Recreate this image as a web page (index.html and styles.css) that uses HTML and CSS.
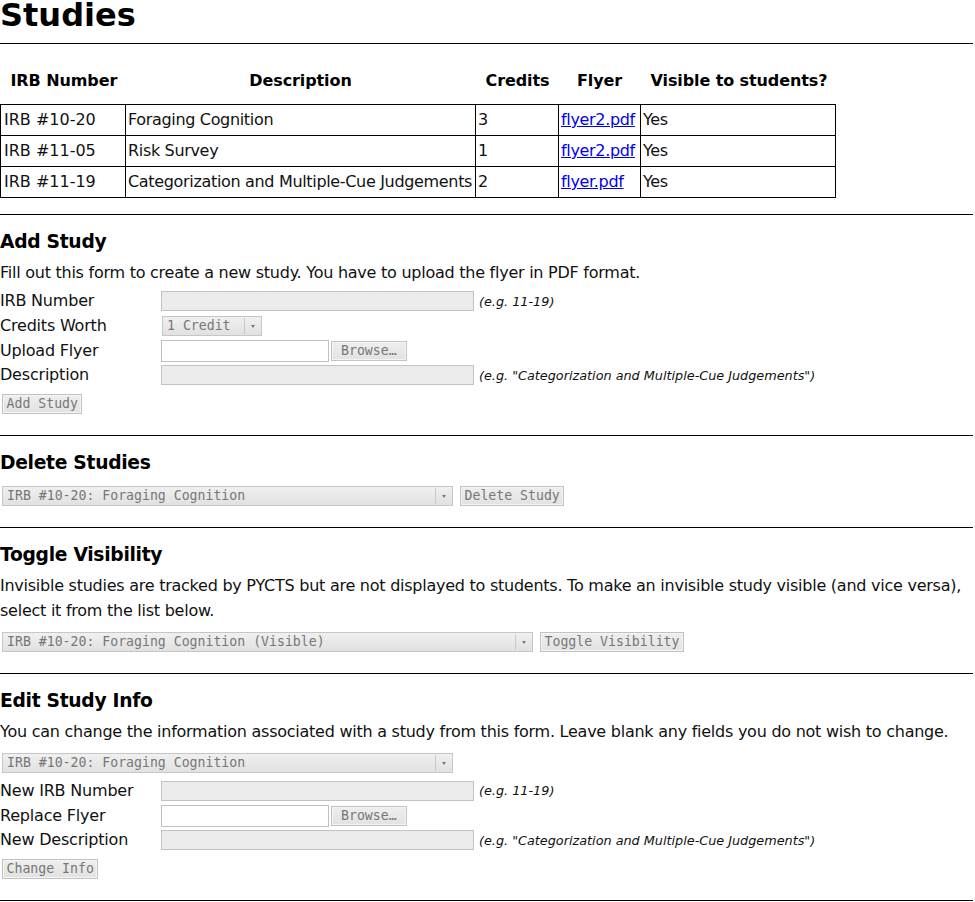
FILE: index.html
```html
<!DOCTYPE html>
<html lang="en">
<head>
<meta charset="utf-8">
<title>Studies</title>
<link rel="stylesheet" href="styles.css">
</head>
<body>
<div class="page">
  <h1 class="title">Studies</h1>
  <hr class="rule rule-top">

  <table class="studies">
    <colgroup>
      <col class="c-irb"><col class="c-desc"><col class="c-cred"><col class="c-flyer"><col class="c-vis">
    </colgroup>
    <thead>
      <tr><th>IRB Number</th><th>Description</th><th>Credits</th><th>Flyer</th><th>Visible to students?</th></tr>
    </thead>
    <tbody>
      <tr><td class="irb">IRB #10-20</td><td>Foraging Cognition</td><td>3</td><td><a href="#">flyer2.pdf</a></td><td>Yes</td></tr>
      <tr><td class="irb">IRB #11-05</td><td>Risk Survey</td><td>1</td><td><a href="#">flyer2.pdf</a></td><td>Yes</td></tr>
      <tr><td class="irb">IRB #11-19</td><td>Categorization and Multiple-Cue Judgements</td><td>2</td><td><a href="#">flyer.pdf</a></td><td>Yes</td></tr>
    </tbody>
  </table>

  <hr class="rule rule-table">

  <section class="sec">
    <h3 class="sec-title">Add Study</h3>
    <p class="sec-text">Fill out this form to create a new study. You have to upload the flyer in PDF format.</p>
    <div class="fields">
      <label class="f-label">IRB Number</label>
      <div class="f-ctl"><input class="text-in" type="text"><span class="hint">(e.g. 11-19)</span></div>
      <label class="f-label">Credits Worth</label>
      <div class="f-ctl">
        <span class="sel sel-credit">
          <select class="sel-box"><option>1 Credit</option><option>2 Credits</option><option>3 Credits</option></select>
          <span class="sel-arrow"></span>
        </span>
      </div>
      <label class="f-label">Upload Flyer</label>
      <div class="f-ctl"><span class="file"><span class="file-box"></span><button class="btn btn-browse" type="button">Browse…</button></span></div>
      <label class="f-label">Description</label>
      <div class="f-ctl"><input class="text-in" type="text"><span class="hint">(e.g. "Categorization and Multiple-Cue Judgements")</span></div>
    </div>
    <div class="actions"><button class="btn" type="button">Add Study</button></div>
  </section>

  <hr class="rule">

  <section class="sec">
    <h3 class="sec-title">Delete Studies</h3>
    <div class="picker">
      <span class="sel sel-wide">
        <select class="sel-box"><option>IRB #10-20: Foraging Cognition</option><option>IRB #11-05: Risk Survey</option><option>IRB #11-19: Categorization and Multiple-Cue Judgements</option></select>
        <span class="sel-arrow"></span>
      </span>
      <button class="btn" type="button">Delete Study</button>
    </div>
  </section>

  <hr class="rule">

  <section class="sec">
    <h3 class="sec-title">Toggle Visibility</h3>
    <p class="sec-text">Invisible studies are tracked by PYCTS but are not displayed to students. To make an invisible study visible (and vice versa), select it from the list below.</p>
    <div class="picker">
      <span class="sel sel-wider">
        <select class="sel-box"><option>IRB #10-20: Foraging Cognition (Visible)</option><option>IRB #11-05: Risk Survey (Visible)</option><option>IRB #11-19: Categorization and Multiple-Cue Judgements (Visible)</option></select>
        <span class="sel-arrow"></span>
      </span>
      <button class="btn" type="button">Toggle Visibility</button>
    </div>
  </section>

  <hr class="rule">

  <section class="sec">
    <h3 class="sec-title">Edit Study Info</h3>
    <p class="sec-text">You can change the information associated with a study from this form. Leave blank any fields you do not wish to change.</p>
    <div class="picker">
      <span class="sel sel-wide">
        <select class="sel-box"><option>IRB #10-20: Foraging Cognition</option><option>IRB #11-05: Risk Survey</option><option>IRB #11-19: Categorization and Multiple-Cue Judgements</option></select>
        <span class="sel-arrow"></span>
      </span>
    </div>
    <div class="fields fields-edit">
      <label class="f-label">New IRB Number</label>
      <div class="f-ctl"><input class="text-in" type="text"><span class="hint">(e.g. 11-19)</span></div>
      <label class="f-label">Replace Flyer</label>
      <div class="f-ctl"><span class="file"><span class="file-box"></span><button class="btn btn-browse" type="button">Browse…</button></span></div>
      <label class="f-label">New Description</label>
      <div class="f-ctl"><input class="text-in" type="text"><span class="hint">(e.g. "Categorization and Multiple-Cue Judgements")</span></div>
    </div>
    <div class="actions"><button class="btn" type="button">Change Info</button></div>
  </section>

  <hr class="rule">
</div>
</body>
</html>
```

FILE: styles.css
```css
html, body {
  margin: 0;
  padding: 0;
  background: #fff;
}

body {
  font-family: "DejaVu Sans", "Liberation Sans", sans-serif;
  font-size: 16px;
  color: #111;
}

.page {
  width: 973px;
}

.title {
  margin: 0;
  font-size: 32px;
  line-height: 30px;
  font-weight: bold;
  color: #000;
}

.rule {
  display: block;
  height: 0;
  border: 0;
  border-top: 1px solid #000;
  margin: 21px 0 15px;
}

.rule-top {
  margin-top: 13px;
}

.rule-table {
  margin-top: 16px;
}

/* ---------- table ---------- */
.studies {
  border-collapse: collapse;
  table-layout: fixed;
  width: 835px;
}

.c-irb { width: 125px; }
.c-desc { width: 350px; }
.c-cred { width: 83px; }
.c-flyer { width: 82px; }
.c-vis { width: 195px; }

.studies th {
  padding: 10px 10px 11px;
  line-height: 24px;
  font-weight: bold;
  text-align: center;
  color: #000;
  white-space: nowrap;
  letter-spacing: -0.1px;
}

.studies td {
  border: 1px solid #000;
  padding: 3px 2px;
  line-height: 24px;
  white-space: nowrap;
  text-align: left;
  letter-spacing: -0.33px;
}

.studies td.irb {
  padding-left: 3px;
  letter-spacing: 0;
}

.studies a {
  color: #0000ee;
  text-decoration: underline;
}

/* ---------- sections ---------- */
.sec-title {
  margin: 0 0 6px;
  font-size: 18.72px;
  line-height: 24px;
  font-weight: bold;
  color: #000;
  letter-spacing: -0.3px;
}

.sec-text {
  margin: 0 0 4px;
  line-height: 25px;
  letter-spacing: -0.25px;
}

.fields {
  display: grid;
  grid-template-columns: 161px auto;
  grid-auto-rows: 24.67px;
  align-items: center;
}

.fields-edit {
  margin-top: 6px;
}

.f-label {
  line-height: 20px;
  white-space: nowrap;
  letter-spacing: -0.2px;
}

.f-ctl {
  display: flex;
  align-items: center;
}

.text-in {
  box-sizing: border-box;
  width: 313px;
  height: 20px;
  margin: 0;
  padding: 0 4px;
  border: 1px solid #c3c3c3;
  background: #ebebeb;
  font-family: "DejaVu Sans Mono", monospace;
  font-size: 13.2px;
  color: #777;
  outline: none;
}

.hint {
  margin-left: 5px;
  font-size: 12.8px;
  font-style: italic;
  color: #111;
  white-space: nowrap;
}

/* ---------- select ---------- */
.sel {
  position: relative;
  display: inline-block;
  height: 20px;
}

.sel-credit {
  width: 100px;
  margin-left: 1px;
}

.sel-wide {
  width: 451px;
}

.sel-wider {
  width: 531px;
}

.sel-box {
  -webkit-appearance: none;
  appearance: none;
  box-sizing: border-box;
  display: block;
  width: 100%;
  height: 20px;
  margin: 0;
  padding: 0 20px 0 4px;
  border: 1px solid #c6c6c6;
  border-radius: 0;
  background: linear-gradient(#f0f0f0, #e1e1e1);
  font-family: "DejaVu Sans Mono", monospace;
  font-size: 13.2px;
  line-height: 18px;
  color: #777;
  outline: none;
}

.sel-arrow {
  position: absolute;
  top: 2px;
  right: 1px;
  width: 16px;
  height: 16px;
  border-left: 1px solid #c8c8c8;
  pointer-events: none;
}

.sel-arrow::after {
  content: "";
  position: absolute;
  left: 6px;
  top: 7px;
  width: 0;
  height: 0;
  border-left: 2.5px solid transparent;
  border-right: 2.5px solid transparent;
  border-top: 3px solid #777;
}

/* ---------- buttons ---------- */
.btn {
  -webkit-appearance: none;
  appearance: none;
  box-sizing: border-box;
  height: 20px;
  margin: 0;
  padding: 0 3.5px;
  border: 1px solid #c2c2c2;
  border-radius: 0;
  background: linear-gradient(#eeeeee, #e2e2e2);
  box-shadow: inset 0 0 0 1px #f4f4f4;
  font-family: "DejaVu Sans Mono", monospace;
  font-size: 13.2px;
  line-height: 18px;
  color: #777;
  white-space: nowrap;
}

.btn-browse {
  padding: 0 9px;
}

.actions {
  margin-top: 6px;
  padding-left: 2px;
  display: flex;
}

.picker {
  padding-top: 5px;
  padding-left: 2px;
  display: flex;
  align-items: center;
  gap: 7px;
}

/* ---------- file field ---------- */
.file {
  display: inline-flex;
  align-items: center;
  gap: 2px;
}

.file-box {
  box-sizing: border-box;
  display: block;
  width: 168px;
  height: 22px;
  border: 1px solid #c0c0c0;
  background: #fff;
}
```
